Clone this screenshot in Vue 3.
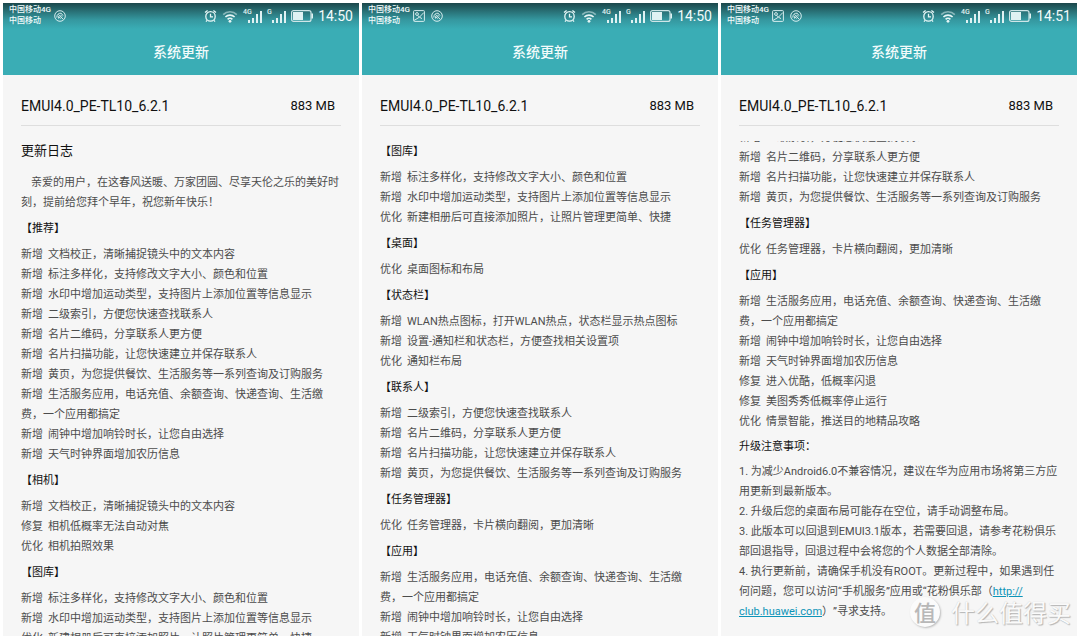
<script setup>
const gallery = {
  title: '图库',
  items: [
    ['新增', '标注多样化，支持修改文字大小、颜色和位置'],
    ['新增', '水印中增加运动类型，支持图片上添加位置等信息显示'],
    ['优化', '新建相册后可直接添加照片，让照片管理更简单、快捷'],
  ],
}
const index = ['新增', '二级索引，方便您快速查找联系人']
const card = ['新增', '名片二维码，分享联系人更方便']
const scan = ['新增', '名片扫描功能，让您快速建立并保存联系人']
const yellow = ['新增', '黄页，为您提供餐饮、生活服务等一系列查询及订购服务']
const life = ['新增', '生活服务应用，电话充值、余额查询、快递查询、生活缴费，一个应用都搞定']
const alarm = ['新增', '闹钟中增加响铃时长，让您自由选择']
const weather = ['新增', '天气时钟界面增加农历信息']
const tasks = { title: '任务管理器', items: [['优化', '任务管理器，卡片横向翻阅，更加清晰']] }

const screens = [
  {
    time: '14:50',
    picture: false,
    intro: true,
    sections: [
      {
        title: '推荐',
        items: [
          ['新增', '文档校正，清晰捕捉镜头中的文本内容'],
          gallery.items[0],
          gallery.items[1],
          index,
          card,
          scan,
          yellow,
          life,
          alarm,
          weather,
        ],
      },
      {
        title: '相机',
        items: [
          ['新增', '文档校正，清晰捕捉镜头中的文本内容'],
          ['修复', '相机低概率无法自动对焦'],
          ['优化', '相机拍照效果'],
        ],
      },
      gallery,
    ],
  },
  {
    time: '14:50',
    picture: true,
    sections: [
      gallery,
      { title: '桌面', items: [['优化', '桌面图标和布局']] },
      {
        title: '状态栏',
        items: [
          ['新增', 'WLAN热点图标，打开WLAN热点，状态栏显示热点图标'],
          ['新增', '设置-通知栏和状态栏，方便查找相关设置项'],
          ['优化', '通知栏布局'],
        ],
      },
      { title: '联系人', items: [index, card, scan, yellow] },
      tasks,
      { title: '应用', items: [life, alarm, weather] },
    ],
  },
  {
    time: '14:51',
    picture: true,
    scrolled: true,
    notice: true,
    sections: [
      { title: '', items: [index, card, scan, yellow] },
      tasks,
      {
        title: '应用',
        items: [
          life,
          alarm,
          weather,
          ['修复', '进入优酷，低概率闪退'],
          ['修复', '美图秀秀低概率停止运行'],
          ['优化', '情景智能，推送目的地精品攻略'],
        ],
      },
    ],
  },
]
</script>

<template>
  <main class="page">
    <article v-for="(s, i) in screens" :key="i" class="screen">
      <header class="top">
        <div class="status">
          <div class="carriers"><span>中国移动4G</span><span>中国移动</span></div>
          <svg v-if="s.picture" class="note" width="12" height="12" viewBox="0 0 12 12">
            <rect x="0.6" y="0.6" width="10.8" height="10.8" rx="0.8" />
            <circle cx="4" cy="4" r="1.4" />
            <path d="M1 10.5 6.4 7.2 10.8 2.6M4.6 5.2 6.4 7.2 9 8.6" />
          </svg>
          <svg class="note" width="12" height="12" viewBox="0 0 12 12">
            <circle cx="6" cy="6" r="5.3" />
            <path d="M2.8 7.6C2.8 4.6 4.6 3 7.2 3.2L9 5.6M4.4 4.6 9.4 9.4M4.6 8.6V6.4L6.6 8.6M6.4 4.8 8.2 6.6" />
          </svg>
          <div class="indicators">
            <svg class="clock" width="13" height="14" viewBox="0 0 13 14">
              <circle cx="6.5" cy="7.4" r="4.7" />
              <path d="M6.5 4.8V7.8H9M1 3.6 3.6 1.4M9.4 1.4 12 3.6M3 11.4 2 12.6M10 11.4 11 12.6" />
            </svg>
            <svg class="wifi" width="16" height="13" viewBox="0 0 16 13">
              <path class="dim" d="M1.2 4.6A9.6 9.6 0 0 1 14.8 4.6" />
              <path d="M3.4 7A6.6 6.6 0 0 1 12.6 7M5.6 9.4A3.4 3.4 0 0 1 10.4 9.4" />
              <circle cx="8" cy="11.3" r="1.4" />
            </svg>
            <svg v-for="net in ['4G', 'G']" :key="net" class="signal" width="19" height="16" viewBox="0 0 19 16">
              <text x="0" y="6">{{ net }}</text>
              <path d="M5 12h2v3H5zM9 10h2v5H9zM13 6h2v9h-2zM17 3h2v12h-2z" />
            </svg>
            <svg class="battery" width="22" height="12" viewBox="0 0 22 12">
              <rect class="shell" x="0.6" y="0.6" width="19.4" height="10.8" rx="2" />
              <rect x="2" y="2" width="10" height="8" />
              <path d="M20.4 3.4H22V8.6H20.4z" />
            </svg>
            <time>{{ s.time }}</time>
          </div>
        </div>
        <h1>系统更新</h1>
      </header>

      <div class="version"><span>EMUI4.0_PE-TL10_6.2.1</span><span class="size">883 MB</span></div>

      <div class="log">
        <div class="content" :class="{ scrolled: s.scrolled }">
          <template v-if="s.intro">
            <h2>更新日志</h2>
            <p class="intro">亲爱的用户，在这春风送暖、万家团圆、尽享天伦之乐的美好时刻，提前给您拜个早年，祝您新年快乐！</p>
          </template>
          <section v-for="(sec, j) in s.sections" :key="j">
            <h3 v-if="sec.title">【{{ sec.title }}】</h3>
            <ul>
              <li v-for="(item, k) in sec.items" :key="k"><span class="tag">{{ item[0] }}</span>{{ item[1] }}</li>
            </ul>
          </section>
          <section v-if="s.notice" class="notice">
            <h3>升级注意事项：</h3>
            <p>1. 为减少Android6.0不兼容情况，建议在华为应用市场将第三方应用更新到最新版本。</p>
            <p>2. 升级后您的桌面布局可能存在空位，请手动调整布局。</p>
            <p>3. 此版本可以回退到EMUI3.1版本，若需要回退，请参考花粉俱乐部回退指导，回退过程中会将您的个人数据全部清除。</p>
            <p>4. 执行更新前，请确保手机没有ROOT。更新过程中，如果遇到任何问题，您可以访问“手机服务”应用或“花粉俱乐部（<a href="http://club.huawei.com">http://<wbr>club.huawei.com</a>）”寻求支持。</p>
          </section>
        </div>
      </div>
    </article>

    <div class="watermark"><span class="seal">值</span><span>什么值得买</span></div>
  </main>
</template>

<style>
body {
  margin: 0;
  background: #fff;
}
</style>

<style scoped>
.page {
  position: relative;
  box-sizing: border-box;
  height: 100vh;
  padding: 3px;
  display: grid;
  grid-template-columns: repeat(3, minmax(0, 1fr));
  gap: 3px;
  font-family: Roboto, "Noto Sans CJK SC", sans-serif;
  color: #4c4c4c;
  text-spacing-trim: space-all;
}
h1, h2, h3, p, ul {
  margin: 0;
  padding: 0;
  list-style: none;
  font-weight: 400;
}
.screen {
  display: flex;
  flex-direction: column;
  min-height: 0;
  background: #f6f6f6;
}
.top {
  height: 72px;
  flex: none;
  background: linear-gradient(#1b474b 0, #286f74 8px, #3598a0 17px, #3aadb5 26px);
  color: #f2fbfb;
}
.status {
  display: flex;
  align-items: center;
  gap: 5px;
  height: 26px;
  padding: 0 6px;
}
.carriers {
  display: flex;
  flex-direction: column;
  font-size: 8px;
  line-height: 11px;
  font-weight: 500;
  padding-bottom: 3px;
  margin-right: -2px;
}
.note {
  fill: none;
  stroke: #d5eced;
  stroke-width: 1;
}
.note + .note {
  margin-left: 1px;
}
.indicators {
  display: flex;
  align-items: center;
  gap: 5px;
  margin-left: auto;
}
.clock, .wifi {
  fill: none;
  stroke: #e6f6f6;
  stroke-width: 1.3;
}
.wifi {
  stroke-width: 1.6;
}
.wifi circle {
  fill: #e6f6f6;
  stroke: none;
}
.wifi .dim {
  opacity: 0.5;
}
.signal, .battery {
  fill: #e0f2f3;
}
.signal {
  margin-bottom: 1px;
  overflow: visible;
}
.signal text {
  font-size: 7px;
  font-weight: 500;
}
.battery .shell {
  fill: none;
  stroke: #cfe6e8;
  stroke-width: 1.2;
}
time {
  font-size: 14px;
  line-height: 20px;
}
h1 {
  font-size: 14px;
  line-height: 20px;
  padding-top: 13px;
  text-align: center;
  font-weight: 500;
}
.version {
  display: flex;
  justify-content: space-between;
  align-items: center;
  height: 51px;
  padding: 11px 6px 0 0;
  margin: 0 18px 15px;
  box-sizing: border-box;
  border-bottom: 1px solid #dedede;
  font-size: 14px;
  color: #111;
}
.size {
  font-size: 13px;
}
.log {
  flex: 1;
  min-height: 0;
  overflow: hidden;
  padding: 0 18px;
  font-size: 11px;
  line-height: 20px;
}
.content {
  padding-top: 1px;
}
.scrolled {
  margin-top: -14px;
}
h2 {
  font-size: 13px;
  line-height: 18px;
  margin-bottom: 13px;
  color: #111;
}
.intro {
  text-indent: 10px;
}
h3 {
  font-size: 11px;
  color: #111;
  padding: 6px 0;
}
section:first-child h3 {
  padding-top: 0;
}
.notice h3 {
  padding: 5px 0;
}
.tag {
  margin-right: 5px;
}
a {
  color: #0d94b8;
}
.watermark {
  position: absolute;
  right: 9px;
  bottom: 11px;
  display: flex;
  align-items: center;
  gap: 11px;
  font-family: "Noto Sans CJK SC", sans-serif;
  font-size: 24px;
  line-height: 32px;
  color: #fafafa;
  text-shadow: 1px 1px 1px #b4b4b4, 0 0 1px #ccc;
}
.seal {
  width: 30px;
  height: 30px;
  line-height: 29px;
  border-radius: 50%;
  background: #fbfbfb;
  box-shadow: 1px 1px 2px #bbb;
  text-align: center;
  font-size: 22px;
  font-weight: 500;
  color: #b8b8b8;
  text-shadow: none;
}
</style>
